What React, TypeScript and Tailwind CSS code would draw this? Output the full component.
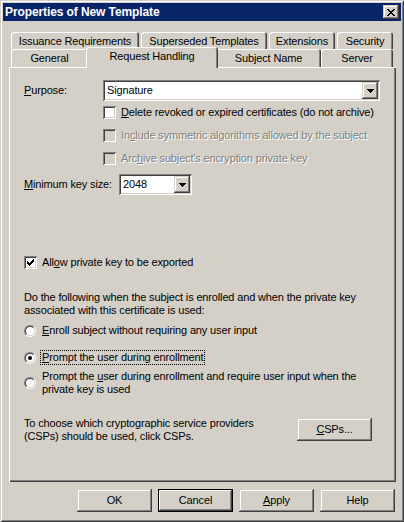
import React from "react";

const raisedOuterFace =
  "shadow-[inset_-1px_-1px_#404040,inset_1px_1px_#d4d0c8,inset_-2px_-2px_#808080,inset_2px_2px_#ffffff]";
const sunken =
  "shadow-[inset_1px_1px_#808080,inset_-1px_-1px_#ffffff,inset_2px_2px_#404040,inset_-2px_-2px_#d4d0c8]";

function U({ children }: { children: React.ReactNode }) {
  return <span className="underline underline-offset-[1px] decoration-1">{children}</span>;
}

function Tab({ label, w, selected }: { label: string; w: string; selected?: boolean }) {
  return (
    <div
      className={`${w} ${
        selected ? "h-[21px] -mt-[2px] relative z-10 -mx-[2px] pb-[3px]" : "h-full pt-[1px]"
      } bg-[#d4d0c8] rounded-t-[3px] flex items-center justify-center shadow-[inset_1px_1px_#ffffff,inset_-1px_0_#404040,inset_-2px_0_#808080]`}>
      <span className="whitespace-nowrap">{label}</span>
    </div>
  );
}

function Check({ checked, disabled }: { checked?: boolean; disabled?: boolean }) {
  return (
    <div
      className={`w-[13px] h-[13px] shrink-0 ${sunken} ${
        disabled ? "bg-[#d4d0c8]" : "bg-white"
      } flex items-center justify-center`}>
      {checked && (
        <svg width="7" height="7" viewBox="0 0 7 7" shapeRendering="crispEdges">
          <path
            d="M0 2h1v3h-1z M1 3h1v3h-1z M2 4h1v3h-1z M3 3h1v3h-1z M4 2h1v3h-1z M5 1h1v3h-1z M6 0h1v3h-1z"
            fill="#000"
          />
        </svg>
      )}
    </div>
  );
}

function Radio({ checked }: { checked?: boolean }) {
  return (
    <div className="w-[12px] h-[12px] shrink-0 rounded-full border border-t-[#808080] border-l-[#808080] border-b-white border-r-white">
      <div className="w-full h-full rounded-full border border-t-[#404040] border-l-[#404040] border-b-[#d4d0c8] border-r-[#d4d0c8] bg-white flex items-center justify-center">
        {checked && <div className="w-[4px] h-[4px] rounded-full bg-black" />}
      </div>
    </div>
  );
}

function DropButton() {
  return (
    <div className={`w-[16px] h-[17px] bg-[#d4d0c8] ${raisedOuterFace} flex items-center justify-center`}>
      <svg width="7" height="4" viewBox="0 0 7 4" shapeRendering="crispEdges">
        <path d="M0 0h7v1h-7z M1 1h5v1h-5z M2 2h3v1h-3z M3 3h1v1h-1z" fill="#000" />
      </svg>
    </div>
  );
}

function Combo({ value, w }: { value: string; w: string }) {
  return (
    <div className={`${w} h-[21px] bg-white ${sunken} flex items-center pl-[4px] pr-[2px]`}>
      <span className="flex-1">{value}</span>
      <DropButton />
    </div>
  );
}

function Button({ children, isDefault }: { children: React.ReactNode; isDefault?: boolean }) {
  return (
    <div
      className={`w-[75px] h-[23px] bg-[#d4d0c8] flex items-center justify-center ${
        isDefault
          ? "shadow-[inset_0_0_0_1px_#000000,inset_-2px_-2px_#404040,inset_2px_2px_#ffffff,inset_-3px_-3px_#808080]"
          : raisedOuterFace
      }`}>
      {children}
    </div>
  );
}

const App = () => {
  const dis = "text-[#808080] [text-shadow:1px_1px_#ffffff]";
  return (
    <div className="w-[404px] h-[522px] bg-[#d4d0c8] p-[3px] flex flex-col text-[11px] leading-[13px] tracking-[-0.15px] text-black font-['Liberation_Sans',Arial,sans-serif] shadow-[inset_1px_1px_#d4d0c8,inset_-1px_-1px_#404040,inset_2px_2px_#ffffff,inset_-2px_-2px_#808080]">
      <div className="h-[18px] bg-[#0a246a] flex items-center justify-between pl-[2px] pr-[2px]">
        <span className="text-white font-bold text-[12px] tracking-[-0.1px]">Properties of New Template</span>
        <div className={`w-[16px] h-[14px] bg-[#d4d0c8] ${raisedOuterFace} flex items-center justify-center`}>
          <svg width="8" height="7" viewBox="0 0 8 7" shapeRendering="crispEdges">
            <path
              d="M0 0h2v1h-2z M6 0h2v1h-2z M1 1h2v1h-2z M5 1h2v1h-2z M2 2h4v1h-4z M3 3h2v1h-2z M2 4h4v1h-4z M1 5h2v1h-2z M5 5h2v1h-2z M0 6h2v1h-2z M6 6h2v1h-2z"
              fill="#000"
            />
          </svg>
        </div>
      </div>

      <div className="mt-[11px] pl-[6px] flex flex-col">
        <div className="flex gap-[2px] ml-[2px] h-[17px]">
          <Tab label="Issuance Requirements" w="w-[128px]" />
          <Tab label="Superseded Templates" w="w-[126px]" />
          <Tab label="Extensions" w="w-[66px]" />
          <Tab label="Security" w="w-[56px]" />
        </div>
        <div className="flex ml-[2px] h-[18px]">
          <Tab label="General" w="w-[77px]" />
          <Tab label="Request Handling" w="w-[132px]" selected />
          <Tab label="Subject Name" w="w-[105px]" />
          <Tab label="Server" w="w-[72px]" />
        </div>

        <div className="w-[387px] h-[415px] shadow-[inset_1px_1px_#ffffff,inset_-1px_-1px_#404040,inset_-2px_-2px_#808080] pl-[15px] flex flex-col">
          <div className="mt-[13px] h-[21px] flex items-center">
            <span className="w-[79px]">
              <U>P</U>urpose:
            </span>
            <Combo value="Signature" w="w-[277px]" />
          </div>
          <div className="ml-[79px] mt-[5px] h-[13px] flex items-center gap-[5px]">
            <Check />
            <span>
              <U>D</U>elete revoked or expired certificates (do not archive)
            </span>
          </div>
          <div className="ml-[79px] mt-[10px] h-[13px] flex items-center gap-[5px]">
            <Check disabled />
            <span className={dis}>
              In<U>c</U>lude symmetric algorithms allowed by the subject
            </span>
          </div>
          <div className="ml-[79px] mt-[10px] h-[13px] flex items-center gap-[5px]">
            <Check disabled />
            <span className={dis}>
              Arc<U>h</U>ive subject's encryption private key
            </span>
          </div>
          <div className="mt-[9px] h-[21px] flex items-center">
            <span className="w-[95px]">
              <U>M</U>inimum key size:
            </span>
            <Combo value="2048" w="w-[73px]" />
          </div>
          <div className="mt-[61px] h-[13px] flex items-center gap-[5px]">
            <Check checked />
            <span>
              All<U>o</U>w private key to be exported
            </span>
          </div>
          <p className="mt-[22px]">
            Do the following when the subject is enrolled and when the private key
            <br />
            associated with this certificate is used:
          </p>
          <div className="mt-[7px] h-[13px] flex items-center gap-[6px]">
            <Radio />
            <span>
              <U>E</U>nroll subject without requiring any user input
            </span>
          </div>
          <div className="mt-[14px] h-[13px] flex items-center gap-[5px]">
            <Radio checked />
            <span className="outline-1 outline-dotted outline-black px-[1px]">
              <U>P</U>rompt the user during enrollment
            </span>
          </div>
          <div className="mt-[6px] h-[26px] flex items-center gap-[6px]">
            <Radio />
            <span>
              Prompt the <U>u</U>ser during enrollment and require user input when the
              <br />
              private key is used
            </span>
          </div>
          <div className="mt-[22px] h-[23px] flex items-center">
            <span className="w-[273px]">
              To choose which cryptographic service providers
              <br />
              (CSPs) should be used, click CSPs.
            </span>
            <Button>
              <U>C</U>SPs...
            </Button>
          </div>
        </div>
      </div>

      <div className="mt-[7px] flex justify-end gap-[6px] pr-[6px]">
        <Button>OK</Button>
        <Button isDefault>Cancel</Button>
        <Button>
          <U>A</U>pply
        </Button>
        <Button>Help</Button>
      </div>
    </div>
  );
};

export default App;
